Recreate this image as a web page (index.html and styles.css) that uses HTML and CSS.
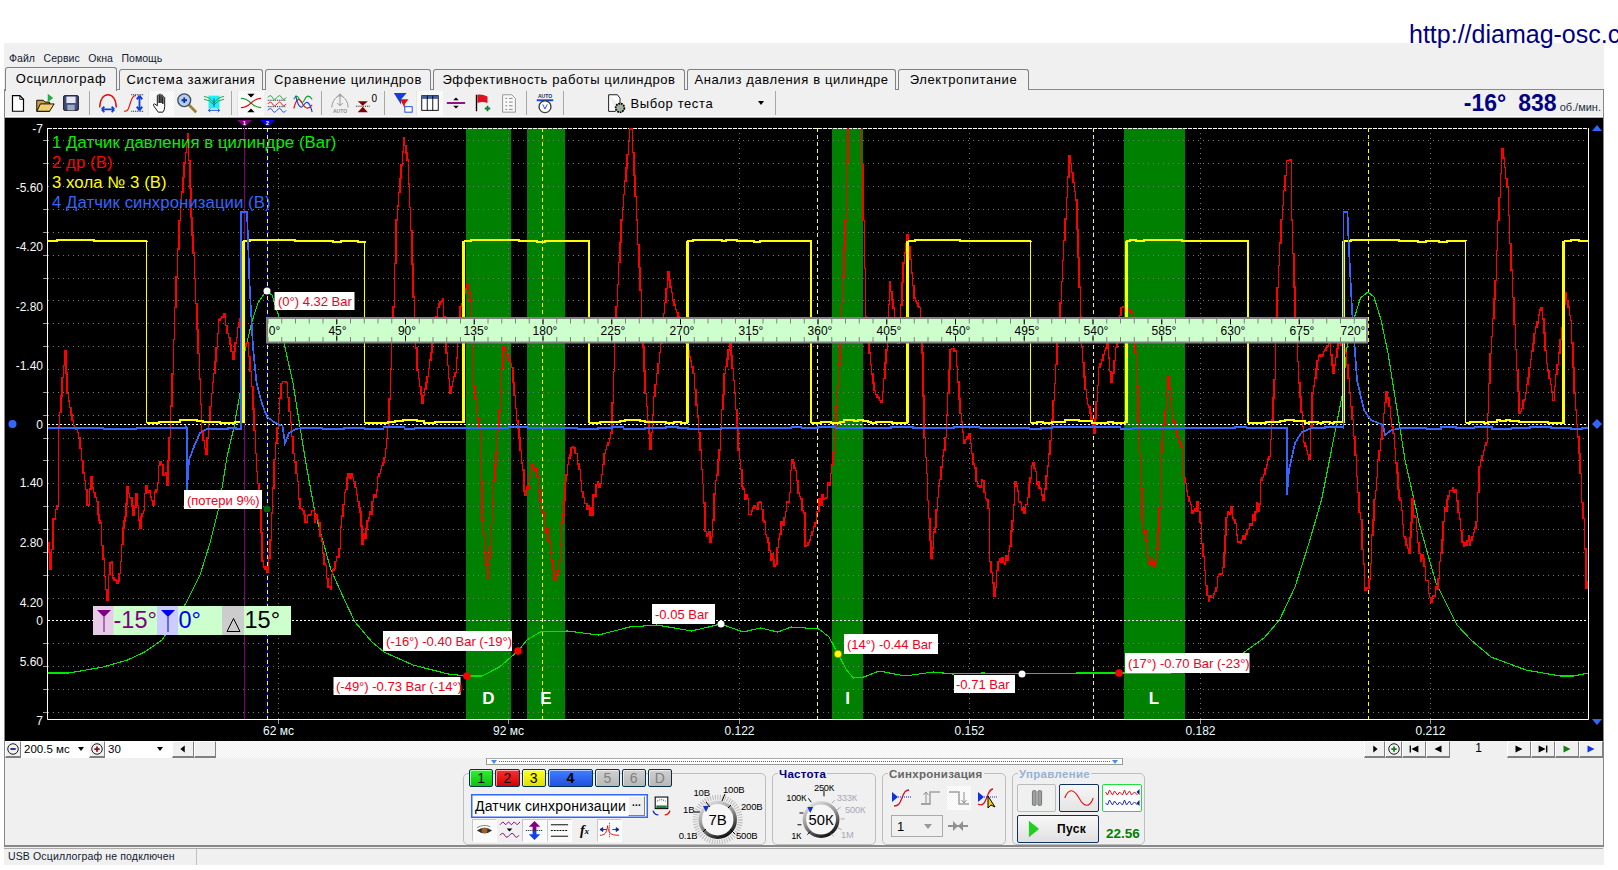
FILE: index.html
```html
<!DOCTYPE html>
<html lang="ru">
<head>
<meta charset="utf-8">
<title>Осциллограф</title>
<link rel="stylesheet" href="styles.css">
</head>
<body>
<a class="url">http://diamag-osc.com</a>
<div class="window">
  <nav class="menu"><span>Файл</span><span>Сервис</span><span>Окна</span><span>Помощь</span></nav>
  <div class="tabs">
    <div class="tab active">Осциллограф</div>
    <div class="tab">Система зажигания</div>
    <div class="tab">Сравнение цилиндров</div>
    <div class="tab">Эффективность работы цилиндров</div>
    <div class="tab">Анализ давления в цилиндре</div>
    <div class="tab">Электропитание</div>
  </div>
  <div class="main">
    <div class="toolbar">
      <span class="tb"><svg class="ic" viewBox="0 0 24 24"><path d="M6 4h8l4 4v13H6z" fill="#fff" stroke="#000" stroke-width="1.3"/><path d="M14 4v4h4" fill="none" stroke="#000"/></svg></span>
      <span class="tb"><svg class="ic" viewBox="0 0 24 24"><path d="M3 21V9h7l2 2h5v10z" fill="#c8a040" stroke="#000"/><path d="M3 21l4-8h15l-5 8z" fill="#f0d070" stroke="#000"/><path d="M15 2l6 4.500-6 4.500z" fill="#20b040"/></svg></span>
      <span class="tb"><svg class="ic" viewBox="0 0 24 24"><rect x="4" y="4" width="16" height="16" rx="1" fill="#405080" stroke="#000"/><rect x="7" y="5" width="10" height="7" fill="#e8e8f0"/><rect x="8" y="14" width="8" height="6" fill="#a0a8c0"/></svg></span>
      <i class="tb-sep"></i>
      <span class="tb"><svg class="ic" viewBox="0 0 24 24"><path d="M3 17C3 8 7 3 12 3s9 5 9 14" fill="none" stroke="#e01010" stroke-width="1.5"/><path d="M5 19h14M5 19l3-3M5 19l3 3M19 19l-3-3M19 19l-3 3" fill="none" stroke="#1040e0" stroke-width="2"/></svg></span>
      <span class="tb"><svg class="ic" viewBox="0 0 24 24"><path d="M1 21c5 0 5-3 7-9s3-8 6-8" fill="none" stroke="#e01010" stroke-width="1.3"/><path d="M9 3h13M9 21h13" stroke="#000" stroke-dasharray="1 1" fill="none"/><path d="M18 4v16M18 4l-3 4M18 4l3 4M18 20l-3-4M18 20l3-4" fill="none" stroke="#1040e0" stroke-width="2"/></svg></span>
      <span class="tb on"><svg class="ic" viewBox="0 0 24 24"><path d="M9 22L4 15q-1-2 1-2l3 2V4q1-2 2 0v8V3q1-2 2 0v9V4q1-2 2 0v9V6q1-2 2 0v10q0 4-2 6z" fill="#fff" stroke="#000"/></svg></span>
      <span class="tb"><svg class="ic" viewBox="0 0 24 24"><path d="M14 14l8 8" stroke="#a08030" stroke-width="3"/><circle cx="9" cy="9" r="7" fill="#b8d0f0" stroke="#405060" stroke-width="1.500"/><path d="M6 9h6M9 6v6" stroke="#1030a0" stroke-width="2"/></svg></span>
      <span class="tb"><svg class="ic" viewBox="0 0 24 24"><rect x="6" y="4" width="12" height="14" fill="#20f0f0"/><path d="M1 5q6 0 11 7q5-7 11-7M1 8q6 0 11 6q5-6 11-6" fill="none" stroke="#10a040"/><path d="M6 20h12M6 20l2-2M6 20l2 2M18 20l-2-2M18 20l-2 2M12 7v9" fill="none" stroke="#1040e0"/></svg></span>
      <i class="tb-sep"></i>
      <span class="tb on"><svg class="ic" viewBox="0 0 24 24"><path d="M1 7q6 0 11 5t11 5" fill="none" stroke="#10a030" stroke-width="1.200"/><path d="M1 17q6 0 11-5t11-5" fill="none" stroke="#e01010" stroke-width="1.200"/><path d="M8 2h8l-4 4zM8 22h8l-4-4z"/></svg></span>
      <span class="tb"><svg class="ic" viewBox="0 0 24 24"><path d="M2 6q3-4 5 0t5 0 5 0 5 0" fill="none" stroke="#10a030"/><path d="M2 13q3-4 5 0t5 0 5 0 5 0" fill="none" stroke="#e01010"/><path d="M2 20q3-4 5 0t5 0 5 0 5 0" fill="none" stroke="#1040e0"/><path d="M2 9h20M2 16h20" stroke="#000" stroke-dasharray="1 1"/></svg></span>
      <span class="tb"><svg class="ic" viewBox="0 0 24 24"><path d="M2 8q3-7 6 0t6 0 8 0" fill="none" stroke="#10a030" stroke-width="1.200"/><path d="M2 18Q6 2 11 12t11 2" fill="none" stroke="#e01010" stroke-width="1.200"/><path d="M4 4q4 18 9 10t9 8" fill="none" stroke="#1040e0" stroke-width="1.200"/></svg></span>
      <i class="tb-sep"></i>
      <span class="tb"><svg class="ic" viewBox="0 0 24 24"><path d="M3 17C4 8 8 5 12 4c4 1 8 4 9 13M12 2v13M12 2l-3 3M12 2l3 3M12 15l-3-3M12 15l3-3" fill="none" stroke="#909090"/><text class="ic-auto" x="12" y="23">AUTO</text></svg></span>
      <span class="tb"><svg class="ic" viewBox="0 0 24 24"><path d="M3 10h11l-5.500 5zM3 22h11l-5.500-6z" fill="#800000"/><path d="M1 15.500h16" stroke="#000" stroke-dasharray="1 1"/><text class="ic-zero" x="18" y="11">0</text></svg></span>
      <i class="tb-sep"></i>
      <span class="tb"><svg class="ic" viewBox="0 0 24 24"><path d="M2 1h14l-6 7v6z" fill="#1040e0"/><path d="M9 8h9l-4 5v5z" fill="#e01010"/><rect x="14" y="16" width="8" height="6" fill="#fff" stroke="#1040e0"/></svg></span>
      <span class="tb on"><svg class="ic" viewBox="0 0 24 24"><rect x="3" y="4" width="18" height="16" fill="#fff" stroke="#000"/><rect x="3" y="4" width="18" height="3.500" fill="#4060a0"/><path d="M9 4v16M15 4v16" stroke="#000"/></svg></span>
      <span class="tb"><svg class="ic" viewBox="0 0 24 24"><path d="M2 12h20" stroke="#800080" stroke-width="2"/><path d="M9 9h6l-3-3zM9 15h6l-3 3z"/></svg></span>
      <span class="tb"><svg class="ic" viewBox="0 0 24 24"><path d="M6 3v18" stroke="#000" stroke-width="1.500"/><path d="M7 3q5-1 11 2v7q-6-2-11 0z" fill="#e01020"/><path d="M15 18h6M18 15v6" stroke="#108030" stroke-width="2"/></svg></span>
      <span class="tb"><svg class="ic" viewBox="0 0 24 24"><path d="M5 3h10l4 4v15H5z" fill="#f8f8f8" stroke="#909090"/><path d="M8 7h2M8 11h2M8 15h2M8 19h2M12 7h4M12 11h4M12 15h4M12 19h4" stroke="#808080"/></svg></span>
      <i class="tb-sep"></i>
      <span class="tb"><svg class="ic" viewBox="0 0 24 24"><text class="ic-auto dark" x="12" y="6">AUTO</text><path d="M3 9h18" stroke="#1040e0" stroke-width="2"/><circle cx="12" cy="16" r="6.500" fill="#fff" stroke="#404040" stroke-width="1.500"/><path d="M9.500 13.500l2.500 5 2.500-5" fill="none" stroke="#1040e0"/></svg></span>
      <i class="tb-sep"></i>
      <div class="test">
        <svg class="ic" viewBox="0 0 24 24"><path d="M3 2h10l3 4v8M3 2v19h8" fill="#fff" stroke="#000"/><circle cx="16" cy="17" r="5" fill="#a0b0a0" stroke="#000" stroke-width="2" stroke-dasharray="2 1"/></svg>
        <span>Выбор теста</span>
        <i class="caret"></i>
      </div>
      <i class="tb-line"></i>
      <div class="rpm"><b>-16°</b><b class="r2">838</b><small>об./мин.</small></div>
    </div>

    <svg class="scope" viewBox="5 118 1598 623">
      <defs><clipPath id="plotclip"><rect x="48" y="128" width="1540" height="592"/></clipPath></defs>
      <g class="bands">
        <rect x="466" y="128" width="45" height="591"/><rect x="527" y="128" width="38" height="591"/><rect x="832" y="128" width="31" height="591"/><rect x="1124" y="128" width="61" height="591"/>
      </g>
      <path class="grid" d="M48 140.500H1588M48 163.500H1588M48 186.500H1588M48 209.500H1588M48 232.500H1588M48 255.500H1588M48 278.500H1588M48 300.500H1588M48 323.500H1588M48 346.500H1588M48 369.500H1588M48 392.500H1588M48 415.500H1588M48 438.500H1588M48 460.500H1588M48 483.500H1588M48 506.500H1588M48 529.500H1588M48 552.500H1588M48 575.500H1588M48 598.500H1588M48 643.500H1588M48 666.500H1588M48 689.500H1588M48 712.500H1588"/>
      <path class="grid" d="M278.500 128V720M508.500 128V720M739.500 128V720M969.500 128V720M1200.500 128V720M1430.500 128V720"/>
      <path class="axis-ticks" d="M278.500 720v4M508.500 720v4M739.500 720v4M969.500 720v4M1200.500 720v4M1430.500 720v4M43 140.500h5M43 163.500h5M43 209.500h5M43 232.500h5M43 255.500h5M43 278.500h5M43 323.500h5M43 346.500h5M43 392.500h5M43 415.500h5M43 438.500h5M43 460.500h5M43 506.500h5M43 529.500h5M43 552.500h5M43 575.500h5M43 643.500h5M43 666.500h5M43 689.500h5M43 712.500h5"/>
      <path class="zero" d="M48 424.500H1588M292 620.500H1588"/>
      <path class="zero" d="M48 620.500H93"/>
      <path class="top" d="M48 128.500H1588"/>
      <path class="frame" d="M47.500 128V719.500H1588.500V128"/>
      <path class="cur-purple" d="M244.500 128V719"/>
      <path class="cur-blue" d="M267.500 128V719"/>
      <path class="tdc" d="M267.500 128V719M542.500 128V719M817.500 128V719M1093.500 128V719M1368.500 128V719"/>
      <g clip-path="url(#plotclip)">
        <path id="tr-green" class="tr green"/>
        <path id="tr-red" class="tr red"/>
        <path id="tr-yh" class="tr yellow"/>
        <path id="tr-yr" class="tr yellow rise"/>
        <path id="tr-yf" class="tr yellow fall"/>
        <path id="tr-blue" class="tr blue"/>
      </g>

      <g class="legend">
        <text class="c-green" x="52" y="148">1 Датчик давления в цилиндре (Bar)</text>
        <text class="c-red" x="52" y="168">2 др (В)</text>
        <text class="c-yellow" x="52" y="188">3 хола № 3 (В)</text>
        <text class="c-blue" x="52" y="208">4 Датчик синхронизации (В)</text>
      </g>

      <g class="ylab">
        <text x="43" y="133">-7</text><text x="43" y="192">-5.60</text><text x="43" y="251">-4.20</text><text x="43" y="311">-2.80</text><text x="43" y="370">-1.40</text><text x="43" y="429">0</text><text x="43" y="487">1.40</text><text x="43" y="547">2.80</text><text x="43" y="607">4.20</text><text x="43" y="625">0</text><text x="43" y="666">5.60</text><text x="43" y="725">7</text>
      </g>
      <g class="xlab">
        <text x="278.500" y="735">62 мс</text><text x="508.500" y="735">92 мс</text><text x="739.500" y="735">0.122</text><text x="969.500" y="735">0.152</text><text x="1200.500" y="735">0.182</text><text x="1430.500" y="735">0.212</text>
      </g>

      <path class="m-purple" d="M237 120H252L244.500 127z"/><text class="m-num" x="244.500" y="125">1</text>
      <path class="m-bluefill" d="M260 120H275L267.500 127z"/><text class="m-num" x="267.500" y="125">2</text>
      <circle class="m-side" cx="12.500" cy="424" r="4"/>
      <path class="m-side" d="M1597 419l5 5-5 5-5-5z"/>
      <path class="m-side" d="M1592 131h10l-5-6z"/>
      <path class="m-side" d="M1592 719h10l-5 6z"/>

      <g class="ruler">
        <rect class="r-bg" x="267" y="318" width="1100" height="24.500"/>
        <line class="r-minor" x1="267.500" y1="321" x2="1367" y2="321"/>
        <line class="r-minor" x1="267.500" y1="339.500" x2="1367" y2="339.500"/>
        <line class="r-major" x1="336.250" y1="338" x2="1367" y2="338"/>
        <line class="r-major" x1="336.250" y1="322" x2="1367" y2="322"/>
        <g class="r-lab">
          <text x="274.500" y="335">0°</text><text x="337.500" y="335">45°</text><text x="407" y="335">90°</text><text x="476" y="335">135°</text><text x="545" y="335">180°</text><text x="613" y="335">225°</text><text x="682" y="335">270°</text><text x="751" y="335">315°</text><text x="820" y="335">360°</text><text x="889" y="335">405°</text><text x="958" y="335">450°</text><text x="1027" y="335">495°</text><text x="1096" y="335">540°</text><text x="1164" y="335">585°</text><text x="1233" y="335">630°</text><text x="1302" y="335">675°</text><text x="1353" y="335">720°</text>
        </g>
      </g>

      <g class="bandlab"><text x="488.500" y="704">D</text><text x="546" y="704">E</text><text x="847.500" y="704">I</text><text x="1154" y="704">L</text></g>

      <g class="pts">
        <circle class="p-w" cx="267" cy="291" r="3.500"/><circle class="p-g" cx="267" cy="509" r="3.500"/><circle class="p-r" cx="467" cy="676" r="3.800"/><circle class="p-r" cx="518" cy="651" r="3.800"/><circle class="p-w" cx="721" cy="624" r="3.500"/><circle class="p-y" cx="838" cy="654" r="3.800"/><circle class="p-w" cx="1022" cy="674" r="3.500"/><circle class="p-r" cx="1119" cy="673" r="3.800"/>
      </g>
      <g class="notes">
        <rect x="274.500" y="292" width="80" height="18"/><text x="278" y="306">(0°) 4.32 Bar</text>
        <rect x="184" y="490" width="78" height="19"/><text x="187" y="505">(потери 9%)</text>
        <rect x="333.500" y="677" width="127" height="18"/><text x="336" y="691">(-49°) -0.73 Bar (-14°)</text>
        <rect x="383" y="631" width="129" height="20"/><text x="386" y="646">(-16°) -0.40 Bar (-19°)</text>
        <rect x="652" y="604" width="63" height="20"/><text x="655" y="619">-0.05 Bar</text>
        <rect x="844" y="634" width="94" height="20"/><text x="847" y="649">(14°) -0.44 Bar</text>
        <rect x="954" y="675" width="61" height="18"/><text x="956" y="689">-0.71 Bar</text>
        <rect x="1125" y="653" width="124.500" height="20"/><text x="1128" y="668">(17°) -0.70 Bar (-23°)</text>
      </g>
      <g class="cursors">
        <rect class="cb-g" x="93" y="606" width="198" height="29"/>
        <rect class="cb-p" x="93" y="606" width="20.500" height="29"/>
        <rect class="cb-b" x="157" y="606" width="21" height="29"/>
        <rect class="cb-n" x="222" y="606" width="22" height="29"/>
        <path class="purple-st" d="M97 610h14l-7 7zM103.500 612h1v20h-1z"/>
        <path class="blue-st" d="M161 610h14l-7 7zM167.500 612h1v20h-1z"/>
        <path class="delta" d="M227 631.500l6.500-13 6.500 13z"/>
        <text class="big t-p" x="113.500" y="627.500">-15°</text>
        <text class="big t-b" x="178.500" y="627.500">0°</text>
        <text class="big t-k" x="244.500" y="627.500">15°</text>
      </g>
    </svg>

    <div class="hscroll">
      <span class="sb"><svg class="mi" viewBox="0 0 16 16"><circle cx="8" cy="8" r="6" fill="none" stroke="#000"/><path d="M5 8h6" stroke="#102080" stroke-width="2"/></svg></span>
      <span class="cb cb1">200.5 мс<i class="caret"></i></span>
      <span class="sb"><svg class="mi" viewBox="0 0 16 16"><circle cx="8" cy="8" r="6" fill="none" stroke="#000"/><path d="M5 8h6M8 5v6" stroke="#801020" stroke-width="2"/></svg></span>
      <span class="cb cb2">30<i class="caret"></i></span>
      <span class="sb wide"><svg class="mi" viewBox="0 0 16 16"><path d="M10 4v8L5 8z"/></svg></span>
      <span class="sb wide"></span>
      <span class="spring"></span>
      <span class="sb w21"><svg class="mi" viewBox="0 0 16 16"><path d="M6 4v8l5-4z"/></svg></span>
      <span class="sb w17"><svg class="mi" viewBox="0 0 16 16"><circle cx="8" cy="8" r="6" fill="none" stroke="#000"/><path d="M5 8h6M8 5v6" stroke="#108020" stroke-width="2"/></svg></span>
      <span class="sb w23"><svg class="mi" viewBox="0 0 16 16"><path d="M3 4h1.500v8H3zM13 4v8L5 8z"/></svg></span>
      <span class="sb w23"><svg class="mi" viewBox="0 0 16 16"><path d="M12 4v8L4 8z"/></svg></span>
      <span class="page">1</span>
      <span class="sb w23"><svg class="mi" viewBox="0 0 16 16"><path d="M4 4v8l8-4z"/></svg></span>
      <span class="sb w23"><svg class="mi" viewBox="0 0 16 16"><path d="M3 4v8l8-4zM11.500 4H13v8h-1.500z"/></svg></span>
      <span class="sb w23"><svg class="mi" viewBox="0 0 16 16"><path d="M4 4v8l8-4z" fill="#108010"/></svg></span>
      <span class="sb w23"><svg class="mi" viewBox="0 0 16 16"><path d="M4 4v8l8-4z" fill="#1030f0"/></svg></span>
    </div>

    <div class="panel">
      <div class="range"><i class="rt"></i><i class="rt"></i></div>
      <div class="groups">
        <section class="group g1">
          <div class="chan">
            <div class="chbtns">
              <button class="ch c1">1</button><button class="ch c2">2</button><button class="ch c3">3</button><button class="ch c4">4</button><button class="ch cx">5</button><button class="ch cx">6</button><button class="ch cx">D</button>
            </div>
            <div class="comborow">
              <div class="combo"><span>Датчик синхронизации</span><span class="dots">...</span></div>
              <svg class="meter" viewBox="0 0 18 20"><rect x="3" y="1" width="12" height="11" fill="#fff" stroke="#000"/><path d="M5 5q4-3 8 0" fill="none" stroke="#404040" stroke-dasharray="1 1"/><rect x="4" y="9" width="10" height="2.500" fill="#208040"/><path d="M1 14q1 4 5 4" fill="none" stroke="#1030c0" stroke-width="1.300"/><path d="M17 14q-1 4-5 4" fill="none" stroke="#e01010" stroke-width="1.300"/></svg>
            </div>
            <div class="minis">
              <span class="mini on"><svg viewBox="0 0 24 22"><path d="M4 11q8-6 16 0q-8 6-16 0z" fill="#303030"/><circle cx="12" cy="11" r="3" fill="#a06020"/><path d="M4 8q7-4 14-1" fill="none" stroke="#808080"/></svg></span>
              <span class="mini"><svg viewBox="0 0 24 22"><path d="M2 5l3-3 3 3 3-3 3 3 3-3 3 3 3-3" fill="none" stroke="#800080"/><path d="M9 9h6l-3 3z"/><path d="M2 16q3-4 5 0t5 0 5 0 5 0" fill="none" stroke="#800080"/></svg></span>
              <span class="mini on"><svg viewBox="0 0 24 22"><path d="M12 1l6 6h-4v4h-4V7H6z" fill="#800080"/><path d="M12 21l6-6h-4v-4h-4v4H6z" fill="#1040f0"/><path d="M3 11h18" stroke="#000" stroke-dasharray="1 1"/></svg></span>
              <span class="mini on"><svg viewBox="0 0 24 22"><path d="M3 5h18M3 17h18" stroke="#000"/><path d="M3 11h18" stroke="#000" stroke-dasharray="2 1"/></svg></span>
              <span class="mini fx">f<sub>x</sub></span>
              <span class="mini on"><svg viewBox="0 0 24 22"><path d="M2 16c5 0 7-2 8-10 1 8 3 10 12 10" fill="none" stroke="#e01010"/><path d="M12 3v16" stroke="#e01010" stroke-dasharray="1 1"/><path d="M2 10h7M22 10h-7M2 10l3-2v4zM22 10l-3-2v4z" stroke="#1030a0"/></svg></span>
            </div>
          </div>
          <svg class="knob k1" viewBox="672 782 92 62">
            <defs><linearGradient id="ring" x1="0.200" y1="0" x2="0.700" y2="1"><stop offset="0" stop-color="#e0e0e0"/><stop offset="0.500" stop-color="#909090"/><stop offset="1" stop-color="#111"/></linearGradient></defs>
            <circle class="hatch" cx="717.700" cy="819.700" r="22.500"/>
            <circle class="kring" cx="717.700" cy="819.700" r="17.500"/>
            <path class="ktick" d="M706 802l4 5M725 794l-3 7M731 805l-3 3M694 812h6M703 832l3-3M735 834l-5-5"/>
            <path class="kmark" d="M703 806h6l-3 6z"/>
            <text class="kval" x="717.700" y="825">7В</text>
            <g class="kl"><text x="701.700" y="796">10В</text><text x="733.700" y="793">100В</text><text x="688.700" y="813">1В</text><text x="751.700" y="810">200В</text><text x="688" y="839">0.1В</text><text x="746.700" y="839">500В</text></g>
          </svg>
        </section>

        <section class="group g2">
          <h4 class="gt navy">Частота</h4>
          <svg class="knob k2" viewBox="772 782 104 62">
            <circle class="kring" cx="821" cy="819.700" r="17"/>
            <path class="ktick" d="M808 798l3 4M824 790v6M799 813h4M797 825h4M807 835l3-3"/>
            <path class="ktick2" d="M835 800l-3 3M841 807l-4 3M845 819h-4M842 830l-4-2M834 837l-3-3"/>
            <path class="kmark" d="M807 807h6l-3 6z"/>
            <text class="kval" x="821" y="825">50К</text>
            <g class="kl"><text x="824" y="791">250К</text><text x="795.700" y="801">100К</text><text x="795.700" y="840">1К</text><text class="dim" x="847.300" y="801">333К</text><text class="dim" x="855.700" y="813">500К</text><text class="dim" x="847.700" y="839">1М</text></g>
          </svg>
        </section>

        <section class="group g3">
          <h4 class="gt grey">Синхронизация</h4>
          <div class="sy-row">
            <svg class="syi" viewBox="0 0 24 24"><path d="M2 6v10l6-5z" fill="#1030e0"/><path d="M4 20c5 0 6-3 8-8s3-8 7-8" fill="none" stroke="#e01020" stroke-width="1.300"/><path d="M8 11h14" stroke="#1030e0" stroke-dasharray="1 1"/></svg>
            <svg class="syi" viewBox="0 0 24 24"><path d="M2 18h9V6h10" fill="none" stroke="#a0a0a0" stroke-width="1.500"/><path d="M7 6v11M4.500 9L7 6l2.500 3M2 18h9" fill="none" stroke="#909090"/></svg>
            <svg class="syi on" viewBox="0 0 24 24"><path d="M2 6h10v12h10" fill="none" stroke="#a0a0a0" stroke-width="1.500"/><path d="M17 6v11M14.500 14l2.500 3 2.500-3" fill="none" stroke="#909090"/></svg>
            <svg class="syi" viewBox="0 0 24 24"><path d="M2 6v10l6-5z" fill="#1030e0"/><path d="M2 18c5 3 7-2 9-7s3-8 6-8" fill="none" stroke="#e01020" stroke-width="1.300"/><path d="M8 11h14" stroke="#1030e0" stroke-dasharray="1 1"/><path d="M12 10v12l3-3 4 2z" fill="#f0d000" stroke="#000" stroke-width="1"/></svg>
          </div>
          <div class="sy-row2">
            <span class="sel">1<i class="caret grey-caret"></i></span>
            <svg class="syj" viewBox="0 0 20 12"><path d="M0 6h20" stroke="#909090" stroke-width="2"/><path d="M5 1v10l5-5zM15 1v10l-5-5z" fill="#909090"/></svg>
          </div>
        </section>

        <section class="group g4">
          <h4 class="gt pale">Управление</h4>
          <div class="ctl">
            <span class="cbtn dis"><svg viewBox="0 0 24 24"><rect x="7" y="4" width="4" height="16" rx="1" fill="#a0a0a0" stroke="#707070"/><rect x="13" y="4" width="4" height="16" rx="1" fill="#a0a0a0" stroke="#707070"/></svg></span>
            <span class="cbtn act"><svg viewBox="0 0 36 24"><path d="M2 12C6 1 12 1 18 12s12 11 16 0" fill="none" stroke="#e01010" stroke-width="1.200"/></svg></span>
            <span class="cbtn wav"><svg viewBox="0 0 36 24"><path d="M1 6l2 3 2-5 3 5 2-4 3 4 2-3 3 3 2-5 2 5 3-4 2 4 3-3 3 3" fill="none" stroke="#e01010"/><path d="M1 17l2 2 2-5 3 5 2-4 3 4 2-3 3 3 2-5 2 5 3-4 2 4 3-3 3 3" fill="none" stroke="#1030d0"/><path d="M35 3v6l-3-3zM35 14v6l-3-3z" fill="#102070"/></svg></span>
            <span class="cbtn run"><svg viewBox="0 0 14 20"><path d="M2 1v18l11-9z" fill="#20d020"/></svg><b>Пуск</b></span>
            <span class="fps">22.56</span>
          </div>
        </section>
      </div>
    </div>
  </div>
  <div class="status"><span class="st1">USB Осциллограф не подключен</span></div>
</div>
<script src="scope.js"></script>
</body>
</html>
```
FILE: styles.css
```css
*{box-sizing:border-box}
html,body{margin:0;padding:0;height:870px;overflow:hidden;background:#fff}
body{font-family:"Liberation Sans",Arial,sans-serif;color:#000;position:relative}
.url{position:absolute;left:1409px;top:18px;font-size:25px;line-height:32px;color:#000080;z-index:2;white-space:nowrap}
.window{margin:43px 0 0 4px;width:1600px;background:#f0f0f0;height:822px}
.menu{height:24px;display:flex;gap:8.500px;padding:9px 0 0 5px;font-size:10.500px;letter-spacing:.05px;line-height:13px;color:#102030}
.tabs{height:23px;display:grid;grid-template-columns:112px 144px 166px 252px 209px 131px;column-gap:2px;padding-left:1px;position:relative;z-index:1}
.tab{border:1px solid #808080;border-bottom:0;border-radius:3px 3px 0 0;margin-top:2px;height:21px;background:#f0f0f0;text-align:center;font-size:13px;letter-spacing:.62px;line-height:20px;white-space:nowrap;overflow:hidden}
.tab.active{margin-top:0;height:24px;line-height:21px;border-bottom:0}
.main{border:1px solid #888;border-bottom-width:2px;margin-top:-1px;height:758px}
.toolbar{height:28px;border-bottom:1px solid #a8a8a8;display:flex;align-items:center;box-shadow:inset 0 -1px 0 #fff;padding-bottom:1px;position:relative}
.tb{width:26.500px;height:25px;display:flex;align-items:center;justify-content:center;flex:none}
.tb.on{background:repeating-conic-gradient(#f4f4f4 0 25%,#fff 0 50%) 0 0/2px 2px;border-left:1px solid #e4e4e4}
.ic{width:22px;height:22px;display:block}
.ic-auto{font-size:5.500px;text-anchor:middle;fill:#909090;font-weight:700}
.ic-auto.dark{fill:#203060}
.ic-zero{font-size:11px;fill:#000}
.tb-sep{width:10px;height:24px;flex:none;position:relative}
.tb-sep::after,.tb-line::after{content:"";position:absolute;left:4px;top:0;bottom:0;width:1px;background:#a8a8a8}
.test{display:flex;align-items:center;margin-left:37px;width:165px;flex:none;font-size:13px;letter-spacing:.6px;gap:4px;position:relative}
.test .ic{width:21px;height:21px}
.test .caret{position:absolute;right:7px;top:8px}
.tb-line{width:10px;height:24px;position:relative;flex:none}
.caret{display:inline-block;width:0;height:0;border:3.500px solid transparent;border-top:4px solid #000;border-bottom:0}
.rpm{margin-left:auto;display:flex;align-items:baseline;color:#000080;padding-right:2px;white-space:nowrap}
.rpm b{font-size:23px;line-height:26px}
.rpm .r2{margin-left:12px}
.rpm small{font-size:11px;color:#203040;margin-left:3px}
.scope{display:block;width:1598px;height:623px;background:#000;font-family:"Liberation Sans",Arial,sans-serif}
.bands rect{fill:#008000}
.grid{stroke:#777;stroke-width:1;stroke-dasharray:1 4;fill:none}
.axis-ticks{stroke:#999;fill:none}
.zero{stroke:#fff;stroke-dasharray:2 2;fill:none}
.top{stroke:#fff;stroke-dasharray:4 1;fill:none}
.frame{stroke:#fff;fill:none}
.cur-purple{stroke:#800080;fill:none}
.cur-blue{stroke:#0000e0;stroke-dasharray:3 4;stroke-dashoffset:3;fill:none}
.tdc{stroke:#ff0;stroke-dasharray:4 3;fill:none}
.tr{fill:none;shape-rendering:crispEdges}
.green{stroke:#00e800;stroke-width:1.100}
.red{stroke:#f00;stroke-width:1.400}
.yellow{stroke:#ff0;stroke-width:2}
.yellow.rise{stroke-width:3}
.yellow.fall{stroke-width:1.500}
.blue{stroke:#3366ff;stroke-width:1.700}
.legend text{font-size:16.700px;letter-spacing:.1px}
.c-green{fill:#00f000}.c-red{fill:#f00}.c-yellow{fill:#ff0}.c-blue{fill:#3366ff}
.ylab text{font-size:12px;fill:#f8f8f8;text-anchor:end}
.xlab text{font-size:12px;fill:#eaffff;text-anchor:middle}
.m-purple{fill:#800080}.m-bluefill{fill:#0000f0}
.m-num{font-size:6px;fill:#fff;text-anchor:middle;font-weight:700}
.m-side{fill:#3366ff}
.r-bg{fill:#ccffcc;stroke:#808080;stroke-width:2}
.r-minor{stroke:#808080;stroke-width:5;stroke-dasharray:1 12.750}
.r-major{stroke:#000;stroke-width:5;stroke-dasharray:1 67.750}
.r-lab text{font-size:12px;fill:#000;text-anchor:middle}
.bandlab text{font-size:17px;font-weight:700;fill:#fff;text-anchor:middle}
.p-w{fill:#fff}.p-g{fill:#006400}.p-r{fill:#f00}.p-y{fill:#ff0;stroke:#804000;stroke-width:.500}
.notes rect{fill:#fff}
.notes text{font-size:13px;fill:#f00020}
.cb-g{fill:#ccffcc}.cb-p{fill:#e6cce6}.cb-b{fill:#ccccff}.cb-n{fill:#ccc}
.purple-st{fill:#800080}.blue-st{fill:#0000f0}
.delta{fill:none;stroke:#000}
.big{font-size:23.500px}
.t-p{fill:#800080}.t-b{fill:#0000f0}.t-k{fill:#000}
.hscroll{height:17px;display:flex;align-items:stretch;background:repeating-conic-gradient(#efefef 0 25%,#fff 0 50%) 0 0/2px 2px}
.sb{width:16px;flex:none;background:#f0f0f0;border:1px solid;border-color:#fff #808080 #808080 #fff;border-bottom-width:2px;display:flex;align-items:center;justify-content:center}
.sb.wide{width:22px}
.sb.w21{width:21px}.sb.w17{width:17px}.sb.w23{width:24px}
.mi{width:14px;height:14px;display:block}
.cb{background:#fff;font-size:11.500px;display:flex;align-items:center;justify-content:space-between;padding:0 5px 1px 3px;flex:none;line-height:14px}
.cb1{width:68px}
.cb2{width:67px;padding-left:3px;padding-right:9px}
.spring{flex:1}
.page{width:57px;flex:none;background:#f0f0f0;text-align:center;font-size:12px;line-height:15px}
.panel{height:87px;display:flex;flex-direction:column;position:relative}
.range{margin-left:481px;width:637px;height:7px;border:1px solid #999;border-top-color:#aaa;background:linear-gradient(#fff,#fff);display:flex;justify-content:space-between;padding:0 4px;position:relative}
.range::after{content:"";position:absolute;left:12px;right:12px;top:2px;border-top:1px dotted #3070e0}
.rt{width:0;height:0;border:3.500px solid transparent;border-top:4px solid #3f8ff0;border-bottom:0;margin-top:1px}
.groups{display:flex;margin:8px 0 0 458px;gap:6px}
.group{border:1px solid #bdbdbd;border-radius:5px;height:72px;position:relative;flex:none}
.gt{position:absolute;left:5px;top:-6px;margin:0;font-size:11.500px;line-height:13px;font-weight:700;background:#f0f0f0;padding:0 1px;letter-spacing:.3px}
.navy{color:#000080}.grey{color:#666}.pale{color:#9ab0d0}
.g1{width:303px;display:flex}
.g2{width:104px}.g3{width:124px}.g4{width:133px}
.chan{width:208px;flex:none}
.chbtns{display:flex;gap:2px;margin:-5px 0 0 5px}
.ch{width:25px;height:18px;padding:0;font:14px "Liberation Sans",Arial,sans-serif;border:1px solid #003050;border-radius:2px;box-shadow:inset 1px 1px 0 rgba(255,255,255,.6)}
.c1{background:linear-gradient(#30f030,#10c010)}
.c2{background:linear-gradient(#f83030,#d80000)}
.c3{background:linear-gradient(#ffff20,#e0e000)}
.c4{width:47px;font-weight:700;background:linear-gradient(#4080ff,#2050e0)}
.cx{background:linear-gradient(#d0d0d0,#b8b8b8);color:#808080}
.comborow{display:flex;margin:7px 0 0 7px;align-items:center;gap:4px}
.combo{width:177px;height:24px;border:1px solid #3366ff;box-shadow:inset 0 0 0 .5px #3366ff;background:#fff;display:flex;align-items:center;justify-content:space-between;padding-left:3px;font-size:14px;letter-spacing:.2px;white-space:nowrap;overflow:hidden}
.dots{width:17px;height:20px;flex:none;background:#efefef;border:1px solid;border-color:#fff #808080 #808080 #fff;font-size:10px;font-weight:700;text-align:center;line-height:12px;margin-right:2px}
.meter{width:19px;height:21px;flex:none}
.minis{display:flex;margin:1px 0 0 8px}
.mini{width:25px;height:23px;flex:none;display:flex;align-items:center;justify-content:center}
.mini svg{width:23px;height:21px}
.mini.on{background:#fafafa;border:1px solid;border-color:#c8c8c8 #fff #fff #c8c8c8}
.fx{font:italic 700 14px "Liberation Serif",serif}
.fx sub{font-size:9px}
.knob{display:block;flex:none}
.k1{width:92px;height:62px;margin-top:8px}
.k2{width:102px;height:62px;margin-top:8px}
.hatch{fill:none;stroke:#bbb;stroke-width:5;stroke-dasharray:1 1.500}
.kring{fill:#f6f6f6;stroke:url(#ring);stroke-width:3.500}
.ktick{stroke:#000;fill:none}
.ktick2{stroke:#aaa;fill:none}
.kmark{fill:#1030d0}
.kval{font-size:15px;text-anchor:middle;fill:#000}
.kl text{font-size:9.500px;text-anchor:middle;fill:#000;letter-spacing:-.2px}
.kl .dim{fill:#a8a8b8}
.sy-row{display:flex;justify-content:flex-start;gap:4.500px;padding:12px 0 0 7px}
.syi{width:24px;height:24px;flex:none}
.syi.on{background:repeating-conic-gradient(#f4f4f4 0 25%,#fff 0 50%) 0 0/2px 2px}
.sy-row2{display:flex;align-items:center;gap:5px;margin:5px 0 0 8px}
.sel{width:52px;height:22px;border:1px solid #aaa;background:#f0f0f0;font-size:13px;display:flex;align-items:center;justify-content:space-between;padding:0 10px 0 5px}
.grey-caret{border-top-color:#999;border-width:4px;border-top-width:5px;border-bottom:0}
.syj{width:20px;height:12px}
.ctl{display:grid;grid-template-columns:39px 40px 40px;grid-template-rows:28px 28px;gap:2.500px 3px;padding:10px 0 0 4px}
.cbtn{border:1px solid #bbb;border-radius:2px;background:#f0f0f0;display:flex;align-items:center;justify-content:center}
.cbtn svg{width:32px;height:22px}
.cbtn.act{border-color:#103060;border-width:1.500px;background:linear-gradient(#f6f6f6,#e4e4e4)}
.cbtn.wav{border-color:#20e040;border-width:1.500px;background:#fff}
.cbtn.wav svg{width:37px;height:24px}
.cbtn.run{grid-column:1/3;border-color:#103060;border-width:1.500px;background:linear-gradient(#f8f8f8,#e0e0e0);justify-content:flex-start;padding-left:9px;font-size:12px}
.cbtn.run svg{width:13px;height:20px}
.cbtn.run b{margin-left:17px;letter-spacing:.4px}
.fps{align-self:end;text-align:center;font-size:13.500px;font-weight:700;color:#008000;line-height:16px;padding:0 0 1px 2px}
.status{margin-top:1px;height:17px;border-top:1px solid #aaa;width:1599px;background:#f0f0f0;font-size:10.500px;letter-spacing:.14px;line-height:15px;color:#102030;padding-left:4px}
.st1{display:inline-block;width:189px;border-right:1px solid #c0c0c0;height:16px}
```
FILE: scope.js
```js
(function () {
  var seed = 90210;
  function rnd() {
    seed = (seed + 0x6D2B79F5) | 0;
    var t = Math.imul(seed ^ (seed >>> 15), 1 | seed);
    t = (t + Math.imul(t ^ (t >>> 7), 61 | t)) ^ t;
    return ((t ^ (t >>> 14)) >>> 0) / 4294967296;
  }
  function sortX(a) {
    var p = [];
    for (var i = 0; i < a.length; i += 2) p.push([a[i], a[i + 1]]);
    return p.sort(function (m, n) { return m[0] - n[0]; });
  }
  function set(id, d) { document.getElementById(id).setAttribute('d', d); }

  var red = sortX([48,543,50,568,53,520,57,507,58.5,427,62,377,65,350,67,393,72,420,78.5,437,83,473,88,507,91,478,95,497,98,513,100,523,103,560,107,598,110,562,114,580,119,575,124,520,126,503,127,487,133,515,136,493,139.5,530,146,487,153,507,160,462,167,483,169,437,176,277,179,220,184,163,187.5,133,191,217,193,253,198,353,201.5,430,205.6,455,210,407,213.6,373,218.7,320,224,313,227,333,232.5,360,237.7,327,241,317,244.6,347,247,343,251.5,387,256.6,473,260,503,262,560,267,573,270,540,274,460,281,383,286,383,293,453,300,507,305,523,310,513,317,520,324,563,329,588,337.6,557,343,503,348,475,355,487,360,513,362,545,372,503,379,473,384,457,387.5,427,393,307,396,220,403.6,138,407,160,410.7,230,413,297,417,370,422,403,427,377,432,343,437.5,307,442.6,298,446,353,449.5,393,455,373,460,307,467,285,470,300,473.6,387,479,427,482,520,487.4,578,492.6,503,496,453,503,347,511.5,367,516.7,420,520,450,525,497,532,463,537,477,540,500,548,540,554,580,558,570,564,500,566,473,571,447,576,453,583,497,588,507,592,517,593,493,600,483,604,453,610.6,433,616,307,621,220,629.5,129,631,129,636.5,220,640,290,643,347,645,393,650,450,653.7,397,660.6,343,667.5,272,672.6,300,686,343,693,373,700,450,703.6,503,705,530,711,538,714,493,719,450,724,373,729.5,343,734.6,393,738,450,743,490,750,513,760.5,503,769,550,774,567,781,523,788,500,791.5,460,796.6,480,803.5,513,805,547,812,532,819,500,826,497,833,453,840,343,841.4,303,845,220,848,105,860,105,863,220,865.5,317,869,353,874,390,881,403,886,350,889.6,282,893,308,898,343,903,263,907,235,914,298,919,307,922,353,924,437,927.5,500,931,557,936,510,939.6,480,945,437,950,350,955,350,960,413,963.7,443,969,433,975.8,483,982.6,480,988,507,989.5,560,994,597,998,563,1007,560,1012,520,1014.7,483,1024,513,1032.6,463,1037.8,483,1043,500,1050,440,1057,343,1060,303,1063.6,240,1069,155,1075.6,200,1078,257,1081.4,347,1085,390,1093.5,433,1098.7,367,1107,343,1111,383,1114,360,1121,307,1131,313,1135,353,1138,420,1142,520,1148.6,562,1155.5,560,1159,510,1160.7,453,1167.6,377,1172.7,420,1181,447,1184.8,483,1191.7,513,1197,503,1198.6,510,1207,597,1216,587,1222.7,567,1226,517,1231,507,1239,543,1247,528,1259,503,1260.6,480,1269,457,1274,380,1277,287,1281,220,1286.4,160,1290,160,1291.5,220,1295,320,1298.5,383,1303.6,443,1309,460,1312,393,1317,360,1329.5,343,1333,373,1338,343,1345,353,1352,420,1359,513,1360.5,520,1364.6,590,1369,580,1374,500,1377.7,460,1386,392,1393,433,1398,490,1400,500,1403.5,537,1408.7,553,1412,500,1419,553,1424,567,1431,602,1438,580,1443,520,1448,497,1455,490,1462,543,1470.7,540,1476,523,1479,467,1486,443,1490,353,1495,280,1497.6,220,1501.7,149,1507,187,1511,270,1515.5,350,1519,413,1524,400,1529,367,1534,333,1541,307,1546.5,363,1552.7,400,1558.5,353,1565.4,293,1570.6,320,1574,393,1577.5,437,1580,473,1583,520,1584.4,550,1586,590,1588,583]);

  // red: subdivide each segment and add sample noise that grows in the lower half
  var d = 'M' + red[0][0] + ' ' + red[0][1];
  var held = 0;
  for (var i = 1; i < red.length; i++) {
    var a = red[i - 1], b = red[i];
    var dx = b[0] - a[0];
    var n = Math.max(1, Math.round(dx / 1.3));
    for (var k = 1; k <= n; k++) {
      var t = k / n;
      var x = a[0] + dx * t, y = a[1] + (b[1] - a[1]) * t;
      var amp = y > 470 ? 6.5 : y > 300 ? 2.4 : 1;
      if (k % 2 || y > 470) held = (rnd() - 0.5) * 2 * amp;
      var yy = k === n ? y + held * 0.3 : y + held;
      d += 'H' + x.toFixed(1) + 'V' + yy.toFixed(1);
    }
  }
  set('tr-red', d);

  var green = sortX([48,673,69,673,103,667,127.5,660,144.7,652,162,640,186,603,200,575,210,543,219,507,227,457,234,427,241,388,244.6,353,251.5,323,258,303,266,291,272,295,279,317,284,343,293,383,300,427,306.6,467,315,513,317,520,331,570,344.5,600,355,622,372,642,384,652,413,665,448,674,467,676,482,676,499.5,667,518,651,527,640,540,632,567.5,631,598.5,635,629.6,627,657,625,691.6,631,721,624,743,632,760.5,628,777.7,632,791.5,627,819,629,829,637,838,654,846.6,670,853.5,678,864,677,879,671,905,676,933,672,953,674,982.6,673,1022,674,1080,673,1119,673,1171,673,1200,669,1225,662,1243,653,1264,638,1279.5,620,1295,587,1309,543,1321.5,500,1329.5,460,1336,427,1342.6,393,1347,347,1353.6,320,1360.5,298,1368,292,1374,297,1381,320,1388,353,1396.6,407,1405,460,1417,513,1419,523,1436,583,1457,625,1471,640,1491,657,1526,670,1560,676,1574,676,1588.5,673]);
  set('tr-green', 'M' + green.map(function (p) { return p[0] + ' ' + p[1]; }).join('L'));

  // yellow: square wave; edges in x, alternating fall/rise
  var edges = [146.5,243,364.5,463.5,589,687,811,907.5,1030.5,1126,1248,1343,1465.5,1563.5];
  var HI = 241, LO = 422.5, yh = '', yr = '', yf = '', px = 48, high = true;
  function flat(x0, x1, isHigh) {
    var s = 'M' + x0 + ' ' + (isHigh ? HI : LO);
    var x = x0, t0 = x0;
    while (x < x1) {
      x = Math.min(x1, x + 3 + rnd() * 6);
      var base = isHigh ? HI : LO, off = (x - t0) / (x1 - t0);
      if (!isHigh && off > 0.22 && off < 0.6) base -= 2.5 * Math.sin((off - 0.22) / 0.38 * Math.PI);
      if (isHigh && off < 0.4) base -= 1;
      s += 'H' + x.toFixed(1) + 'V' + (base + (rnd() - 0.5) * 1).toFixed(1);
    }
    return s;
  }
  edges.concat([1588]).forEach(function (e, i) {
    yh += flat(px, e, high);
    if (i < edges.length) {
      if (high) yf += 'M' + e + ' ' + HI + 'V' + LO;
      else yr += 'M' + e + ' ' + LO + 'V' + HI;
    }
    high = !high; px = e;
  });
  set('tr-yh', yh); set('tr-yr', yr); set('tr-yf', yf);

  // blue: sync pulses on a flat baseline
  var blue = [[48,428],[186,428],[187,428],[187,490],[189,460],[191,455],[194.6,445],[200,433],[206.7,429],[241.3,428],[241.3,212],[247.3,212],[247.3,220],[249.7,287],[253,347],[256.6,383],[261.8,403],[267,417],[275.6,423],[282.5,426],[285,443],[289,433],[296,429],[303,428],[1287,429],[1287,495],[1289,470],[1295,443],[1302,432],[1312,428],[1343.6,428],[1343.6,212],[1347.5,212],[1348.4,237],[1352,310],[1357,380],[1364,410],[1371,420],[1383,425],[1385,435],[1391.5,430],[1402,428],[1588,428]];
  var bd = 'M48 428';
  blue.forEach(function (p, i) {
    if (i === 0) return;
    var q = blue[i - 1];
    if (p[0] - q[0] > 20) {
      var x = q[0];
      while (x < p[0]) {
        x = Math.min(p[0], x + 8 + rnd() * 14);
        bd += 'H' + x.toFixed(1) + 'V' + (428 + Math.round((rnd() - 0.5) * 1.6)).toFixed(1);
      }
    } else {
      bd += 'L' + p[0] + ' ' + p[1];
    }
  });
  set('tr-blue', bd);
})();
```
